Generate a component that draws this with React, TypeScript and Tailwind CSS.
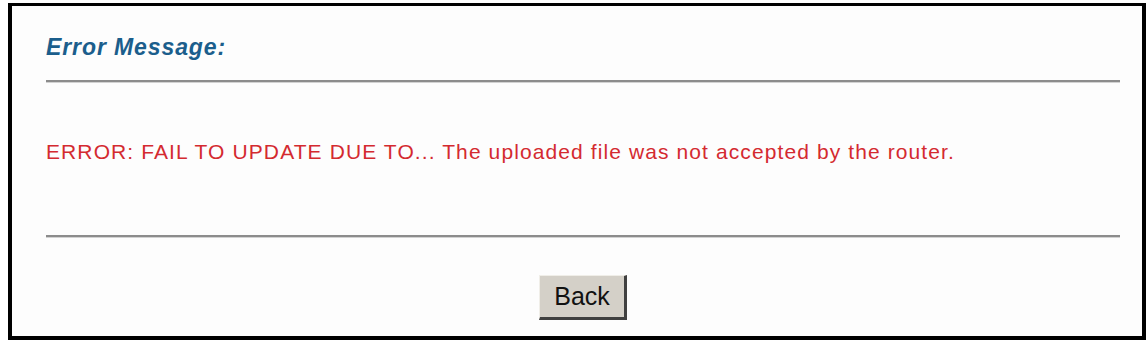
export default function App() {
  return (
    <div className="w-[1146px] h-[340px] bg-white pl-2 pt-[3px] overflow-hidden" style={{ fontFamily: '"Liberation Sans", Arial, sans-serif' }}>
      <div className="h-[337px] border-[4px] border-t-[3px] border-black bg-[#fdfdfd] pl-[34px] pr-[22px] pt-[28px]">
        <h1 className="text-[23px] leading-[26px] font-bold italic text-[#1b5e8c] tracking-[0.9px]">
          Error Message:
        </h1>

        <div className="mt-[20px] border-t-2 border-t-[#8c8c8c] border-b border-b-[#d2d2d2]" />

        <p className="mt-[57px] text-[21px] leading-[24px] text-[#d42a30] tracking-[1.1px]">
          ERROR: FAIL TO UPDATE DUE TO... The uploaded file was not accepted by the router.
        </p>

        <div className="mt-[71px] border-t-2 border-t-[#8c8c8c] border-b border-b-[#d2d2d2]" />

        <div className="flex justify-center mt-[37px]">
          <button className="w-[88px] h-[45px] bg-[#d4d0c8] text-[25px] leading-none text-[#111] border-t border-l border-t-[#f0eee8] border-l-[#f0eee8] border-r-[3px] border-b-[3px] border-r-[#404040] border-b-[#404040]">
            Back
          </button>
        </div>
      </div>
    </div>
  );
}
